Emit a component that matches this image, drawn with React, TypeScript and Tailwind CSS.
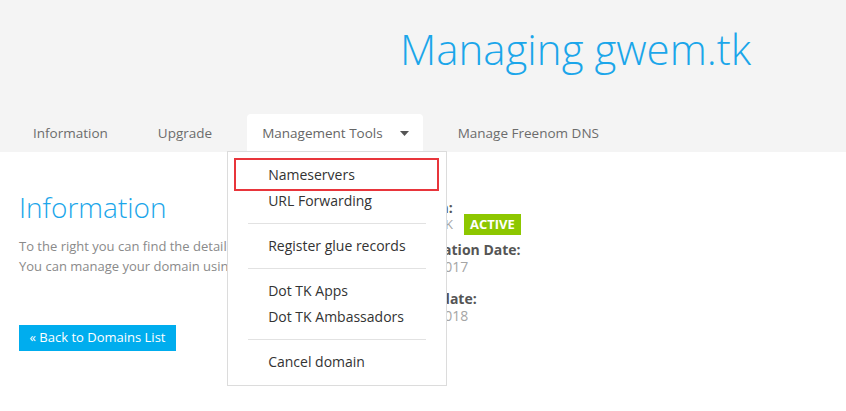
import React from "react";

const tabs = ["Information", "Upgrade", "Management Tools", "Manage Freenom DNS"];

const menuGroups = [
  ["Nameservers", "URL Forwarding"],
  ["Register glue records"],
  ["Dot TK Apps", "Dot TK Ambassadors"],
  ["Cancel domain"],
];

const ToolsMenu = () => (
  <div className="absolute left-[-20px] top-[37px] z-20 w-[220px] border border-[#dcdcdc] bg-white py-[10px]">
    {/* highlight box */}
    <div className="pointer-events-none absolute left-[6px] top-[6px] h-[33px] w-[205px] border-2 border-[#e8353b]" />
    {menuGroups.map((group, gi) => (
      <div key={gi}>
        {gi > 0 && <div className="mx-[20px] my-[9px] h-px bg-[#e2e2e2]" />}
        {group.map((item) => (
          <div key={item} className="h-[26px] pl-[40px] text-[14px] leading-[26px] text-[#333]">
            {item}
          </div>
        ))}
      </div>
    ))}
  </div>
);

const Caret = () => (
  <svg width="9" height="5" viewBox="0 0 9 5" className="ml-[17px]">
    <path d="M0 0h9L4.5 5z" fill="#555" />
  </svg>
);

export default function App() {
  return (
    <div className="min-h-[411px] w-[846px] bg-white font-['Open_Sans',sans-serif]">
      {/* HEADER */}
      <div className="bg-[#f4f4f4] pt-[28px]">
        <h1 className="pl-[400px] text-[42px] font-light leading-[42px] text-[#1ba6ea]">
          Managing gwem.tk
        </h1>
        <div className="mt-[44px] flex h-[38px] gap-[20px] pl-[18px]">
          {tabs.map((tab) =>
            tab === "Management Tools" ? (
              <div key={tab} className="relative">
                <div className="flex h-[38px] items-center rounded-t-[4px] bg-white pl-[15px] pr-[14px] text-[13.5px] text-[#666]">
                  {tab}
                  <Caret />
                </div>
                <ToolsMenu />
              </div>
            ) : (
              <div key={tab} className="flex h-[38px] items-center px-[15px] text-[13.5px] text-[#6c6c6c]">
                {tab}
              </div>
            )
          )}
        </div>
      </div>

      {/* CONTENT */}
      <div className="flex">
        <div className="w-[394px] pl-[19px] pt-[41px]">
          <h2 className="text-[28px] font-light leading-[28px] text-[#1ba6ea]">Information</h2>
          <p className="mt-[15px] text-[13px] leading-[20px] text-[#8a8a8a]">
            To the right you can find the details of your domain.
            <br />
            You can manage your domain using the tools above.
          </p>
          <button className="mt-[49px] h-[26px] w-[157px] bg-[#00adee] text-[13px] text-white">
            « Back to Domains List
          </button>
        </div>
        <div className="pt-[47px] text-[14px] leading-[17px]">
          <div className="font-bold text-[#555]">Domain:</div>
          <div className="flex items-center text-[#a5a5a5]">
            <span className="text-[13px]">GWEM.TK</span>
            <span className="-my-[2px] ml-[11px] bg-[#8dc700] px-[6px] text-[13px] font-bold leading-[21px] text-white">
              ACTIVE
            </span>
          </div>
          <div className="mt-[8px] font-bold text-[#555]">Registration Date:</div>
          <div className="text-[#a5a5a5]">01/05/2017</div>
          <div className="mt-[15px] font-bold text-[#555]">Expiry date:</div>
          <div className="text-[#a5a5a5]">01/05/2018</div>
        </div>
      </div>
    </div>
  );
}
